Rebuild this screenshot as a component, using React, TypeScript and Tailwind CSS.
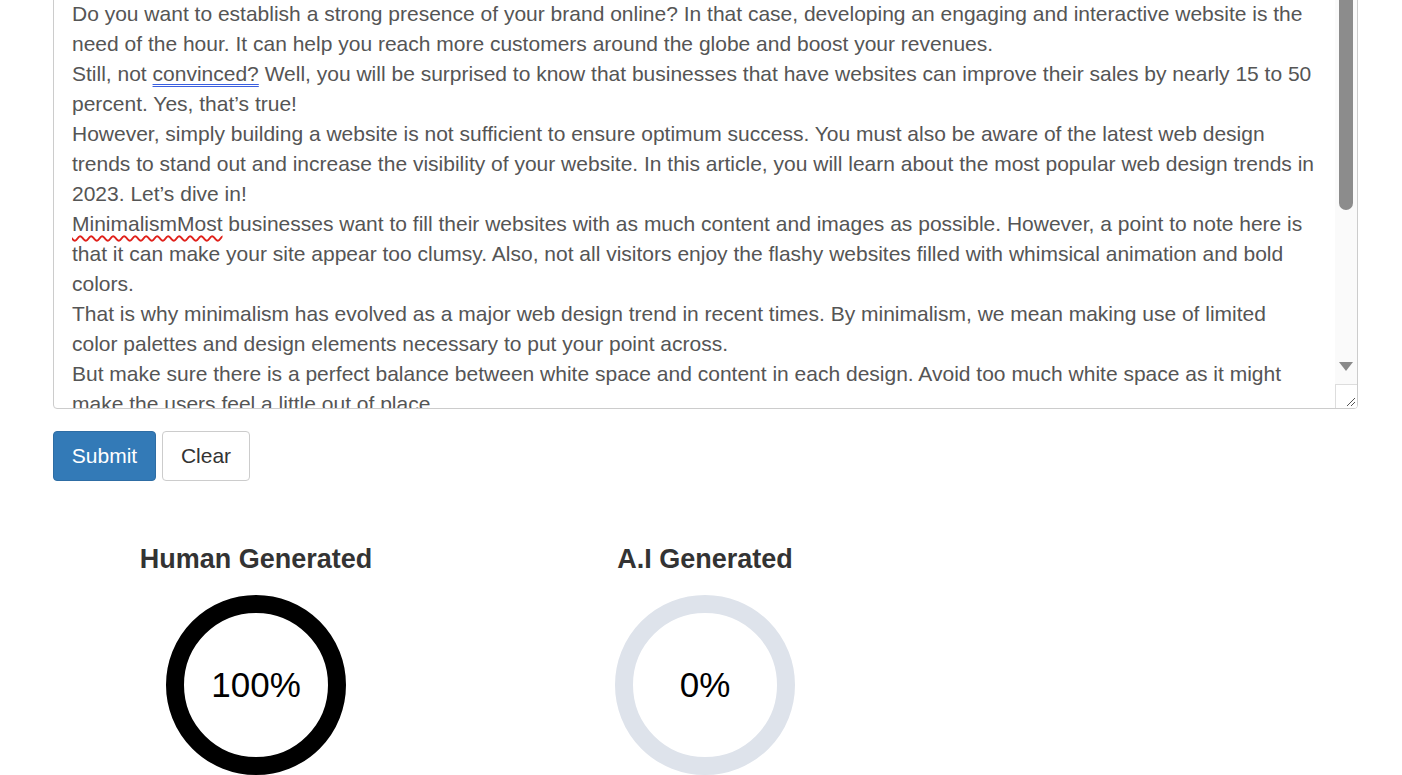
import React from 'react';

const lines: React.ReactNode[] = [
  'Do you want to establish a strong presence of your brand online? In that case, developing an engaging and interactive website is the',
  'need of the hour. It can help you reach more customers around the globe and boost your revenues.',
  <>
    Still, not{' '}
    <span className="underline decoration-double decoration-[#3b5fe0] decoration-[1px] underline-offset-[3px]">convinced?</span>{' '}
    Well, you will be surprised to know that businesses that have websites can improve their sales by nearly 15 to 50
  </>,
  'percent. Yes, that’s true!',
  'However, simply building a website is not sufficient to ensure optimum success. You must also be aware of the latest web design',
  'trends to stand out and increase the visibility of your website. In this article, you will learn about the most popular web design trends in',
  '2023. Let’s dive in!',
  <>
    <span className="underline decoration-wavy decoration-[#e0201a] decoration-[1.5px] underline-offset-[4px]">MinimalismMost</span>{' '}
    businesses want to fill their websites with as much content and images as possible. However, a point to note here is
  </>,
  'that it can make your site appear too clumsy. Also, not all visitors enjoy the flashy websites filled with whimsical animation and bold',
  'colors.',
  'That is why minimalism has evolved as a major web design trend in recent times. By minimalism, we mean making use of limited',
  'color palettes and design elements necessary to put your point across.',
  'But make sure there is a perfect balance between white space and content in each design. Avoid too much white space as it might',
  'make the users feel a little out of place.',
];

function Meter({ title, value, ring }: { title: string; value: number; ring: string }) {
  return (
    <div className="w-[406px] flex flex-col items-center">
      <h3 className="text-[27px] leading-[30px] font-bold text-[#333]">{title}</h3>
      <div className={`mt-[21px] w-[180px] h-[180px] rounded-full border-[18px] ${ring} flex items-center justify-center`}>
        <span className="text-[35px] text-black">{value}%</span>
      </div>
    </div>
  );
}

export default function App() {
  return (
    <div className="h-[775px] overflow-hidden bg-white font-['Liberation_Sans',Arial,sans-serif]">
      {/* textarea, scrolled down */}
      <div className="ml-[53px] w-[1305px] -mt-[31px] h-[440px] border border-[#ccc] rounded-[4px] flex overflow-hidden">
        <div className="flex-1 pl-[18px] pt-[29px] text-[21px] leading-[30px] text-[#555] overflow-hidden">
          {lines.map((l, i) => (
            <div key={i} className="whitespace-nowrap">{l}</div>
          ))}
        </div>
        <div className="w-[22px] bg-[#fafafa] flex flex-col">
          <div className="mx-auto w-[14px] h-[240px] bg-[#8c8c8c] rounded-b-[7px]" />
          <div className="flex-1" />
          <svg width="22" height="12" viewBox="0 0 22 12" className="mb-[11px]">
            <polygon points="4,1 18,1 11,10" fill="#8a8a8a" />
          </svg>
          <div className="h-[24px] border-t border-l border-[#ddd] bg-white flex items-end justify-end">
            <svg width="12" height="12" viewBox="0 0 12 12" className="mb-[1px] mr-[1px]">
              <line x1="3" y1="11" x2="11" y2="3" stroke="#555" strokeWidth="1" />
              <line x1="7" y1="11" x2="11" y2="7" stroke="#555" strokeWidth="1" />
            </svg>
          </div>
        </div>
      </div>

      <div className="ml-[53px] mt-[22px] flex gap-[6px]">
        <button className="w-[103px] h-[50px] rounded-[4px] bg-[#337ab7] border border-[#2e6da4] text-white text-[21px]">Submit</button>
        <button className="w-[88px] h-[50px] rounded-[4px] bg-white border border-[#ccc] text-[#333] text-[21px]">Clear</button>
      </div>

      <div className="ml-[53px] mt-[63px] flex gap-[43px]">
        <Meter title="Human Generated" value={100} ring="border-black" />
        <Meter title="A.I Generated" value={0} ring="border-[#dee3eb]" />
      </div>
    </div>
  );
}
